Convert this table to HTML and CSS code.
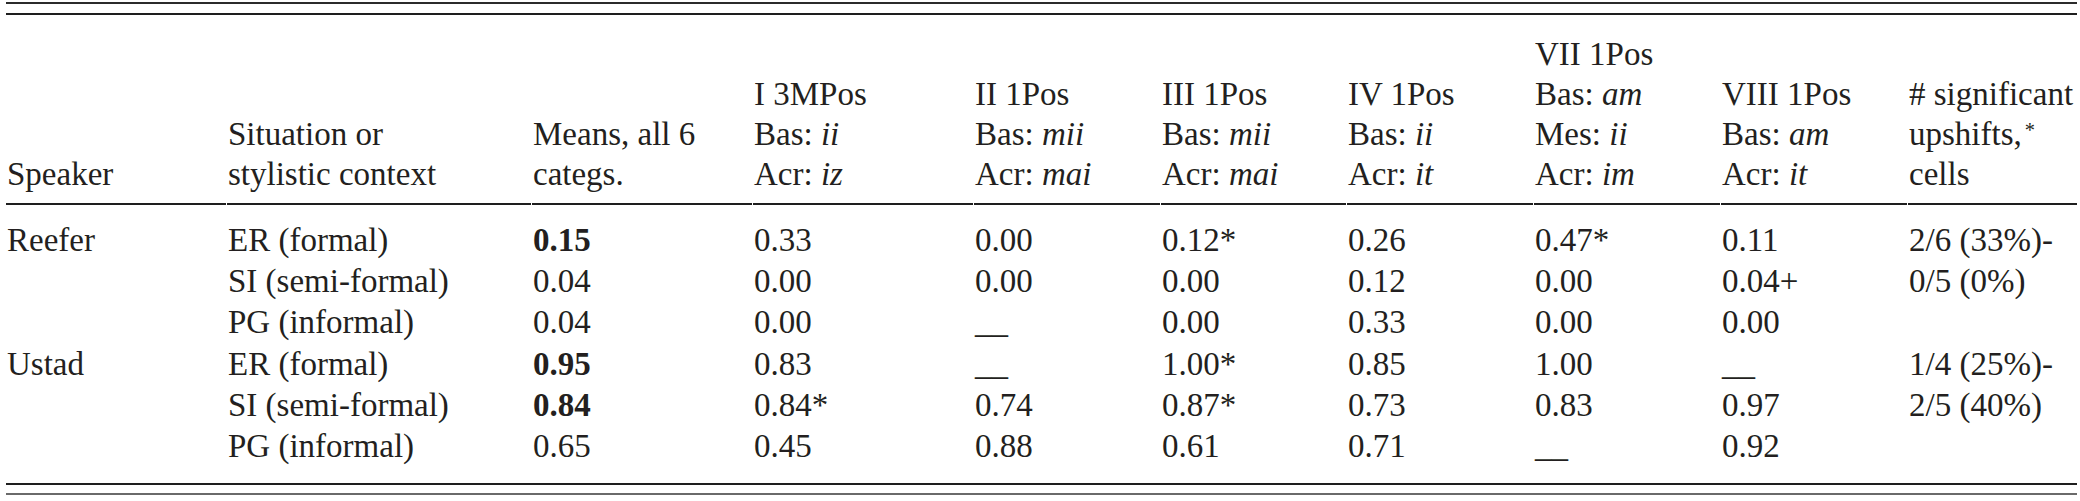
FILE: index.html
```html
<!DOCTYPE html>
<html lang="en">

<head>
  <meta charset="UTF-8" />
  <title>Upshifts by speaker and stylistic context</title>
  <link rel="stylesheet" href="styles.css">
</head>

<body>

  <div class="sheet">
    <table class="data">
      <colgroup>
        <col class="c-speaker">
        <col class="c-context">
        <col class="c-means">
        <col class="c-one">
        <col class="c-two">
        <col class="c-three">
        <col class="c-four">
        <col class="c-seven">
        <col class="c-eight">
        <col class="c-count">
      </colgroup>
      <thead>
        <tr>
          <th>Speaker</th>
          <th>Situation or<br>stylistic context</th>
          <th>Means, all 6<br>categs.</th>
          <th>I 3MPos<br>Bas: <i>ii</i><br>Acr: <i>iz</i></th>
          <th>II 1Pos<br>Bas: <i>mii</i><br>Acr: <i>mai</i></th>
          <th>III 1Pos<br>Bas: <i>mii</i><br>Acr: <i>mai</i></th>
          <th>IV 1Pos<br>Bas: <i>ii</i><br>Acr: <i>it</i></th>
          <th>VII 1Pos<br>Bas: <i>am</i><br>Mes: <i>ii</i><br>Acr: <i>im</i></th>
          <th>VIII 1Pos<br>Bas: <i>am</i><br>Acr: <i>it</i></th>
          <th># significant<br>upshifts,<sup>*</sup><br>cells</th>
        </tr>
      </thead>
      <tbody>
        <tr class="first">
          <td>Reefer</td>
          <td>ER (formal)</td>
          <td><b>0.15</b></td>
          <td>0.33</td>
          <td>0.00</td>
          <td>0.12*</td>
          <td>0.26</td>
          <td>0.47*</td>
          <td>0.11</td>
          <td>2/6 (33%)-</td>
        </tr>
        <tr>
          <td></td>
          <td>SI (semi-formal)</td>
          <td>0.04</td>
          <td>0.00</td>
          <td>0.00</td>
          <td>0.00</td>
          <td>0.12</td>
          <td>0.00</td>
          <td>0.04+</td>
          <td>0/5 (0%)</td>
        </tr>
        <tr>
          <td></td>
          <td>PG (informal)</td>
          <td>0.04</td>
          <td>0.00</td>
          <td>__</td>
          <td>0.00</td>
          <td>0.33</td>
          <td>0.00</td>
          <td>0.00</td>
          <td></td>
        </tr>
        <tr>
          <td>Ustad</td>
          <td>ER (formal)</td>
          <td><b>0.95</b></td>
          <td>0.83</td>
          <td>__</td>
          <td>1.00*</td>
          <td>0.85</td>
          <td>1.00</td>
          <td>__</td>
          <td>1/4 (25%)-</td>
        </tr>
        <tr>
          <td></td>
          <td>SI (semi-formal)</td>
          <td><b>0.84</b></td>
          <td>0.84*</td>
          <td>0.74</td>
          <td>0.87*</td>
          <td>0.73</td>
          <td>0.83</td>
          <td>0.97</td>
          <td>2/5 (40%)</td>
        </tr>
        <tr class="last">
          <td></td>
          <td>PG (informal)</td>
          <td>0.65</td>
          <td>0.45</td>
          <td>0.88</td>
          <td>0.61</td>
          <td>0.71</td>
          <td>__</td>
          <td>0.92</td>
          <td></td>
        </tr>
      </tbody>
    </table>
  </div>

</body>

</html>
```

FILE: styles.css
```css
/* Page reset */
body {
  margin: 0;
  background: #fff;
  color: #231f20;
  font-family: "Liberation Serif", "Times New Roman", serif;
  font-size: 33px;
}

/* Double rules above and below the table */
.sheet {
  width: 2071px;
  margin: 2px 0 0 6px;
  border-top: 2px solid #2b2b2b;
  border-bottom: 2px solid #6a6a6a;
  padding: 9px 0 8px;
}

.data {
  width: 100%;
  border-collapse: collapse;
  table-layout: fixed;
  font-family: "Liberation Serif", "Times New Roman", serif;
  font-size: 33px;
  color: #231f20;
  border-top: 2px solid #1e1e1e;
  border-bottom: 2px solid #1e1e1e;
}

.c-speaker { width: 220px; }
.c-context { width: 305px; }
.c-means { width: 221px; }
.c-one { width: 221px; }
.c-two { width: 187px; }
.c-three { width: 186px; }
.c-four { width: 187px; }
.c-seven { width: 187px; }
.c-eight { width: 187px; }
.c-count { width: 170px; }

th,
td {
  padding: 0 0 0 2px;
  text-align: left;
  font-weight: normal;
  white-space: nowrap;
  font-family: inherit;
}

/* Header block: the rule under it breaks slightly at each column */
thead th {
  vertical-align: bottom;
  line-height: 40px;
  padding-top: 19px;
  padding-bottom: 11px;
  background: linear-gradient(#1e1e1e, #1e1e1e) right bottom / calc(100% - 1px) 2px no-repeat;
}

thead th:first-child,
tbody td:first-child {
  padding-left: 1px;
  background-size: 100% 2px;
}

sup {
  font-size: 0.62em;
  vertical-align: 0.4em;
  line-height: 0;
  margin-left: 3px;
}

/* Body rows */
tbody td {
  line-height: 41.2px;
}

tbody tr.first td {
  padding-top: 15px;
}

tbody tr.last td {
  padding-bottom: 16px;
}

b {
  font-weight: bold;
}
```
